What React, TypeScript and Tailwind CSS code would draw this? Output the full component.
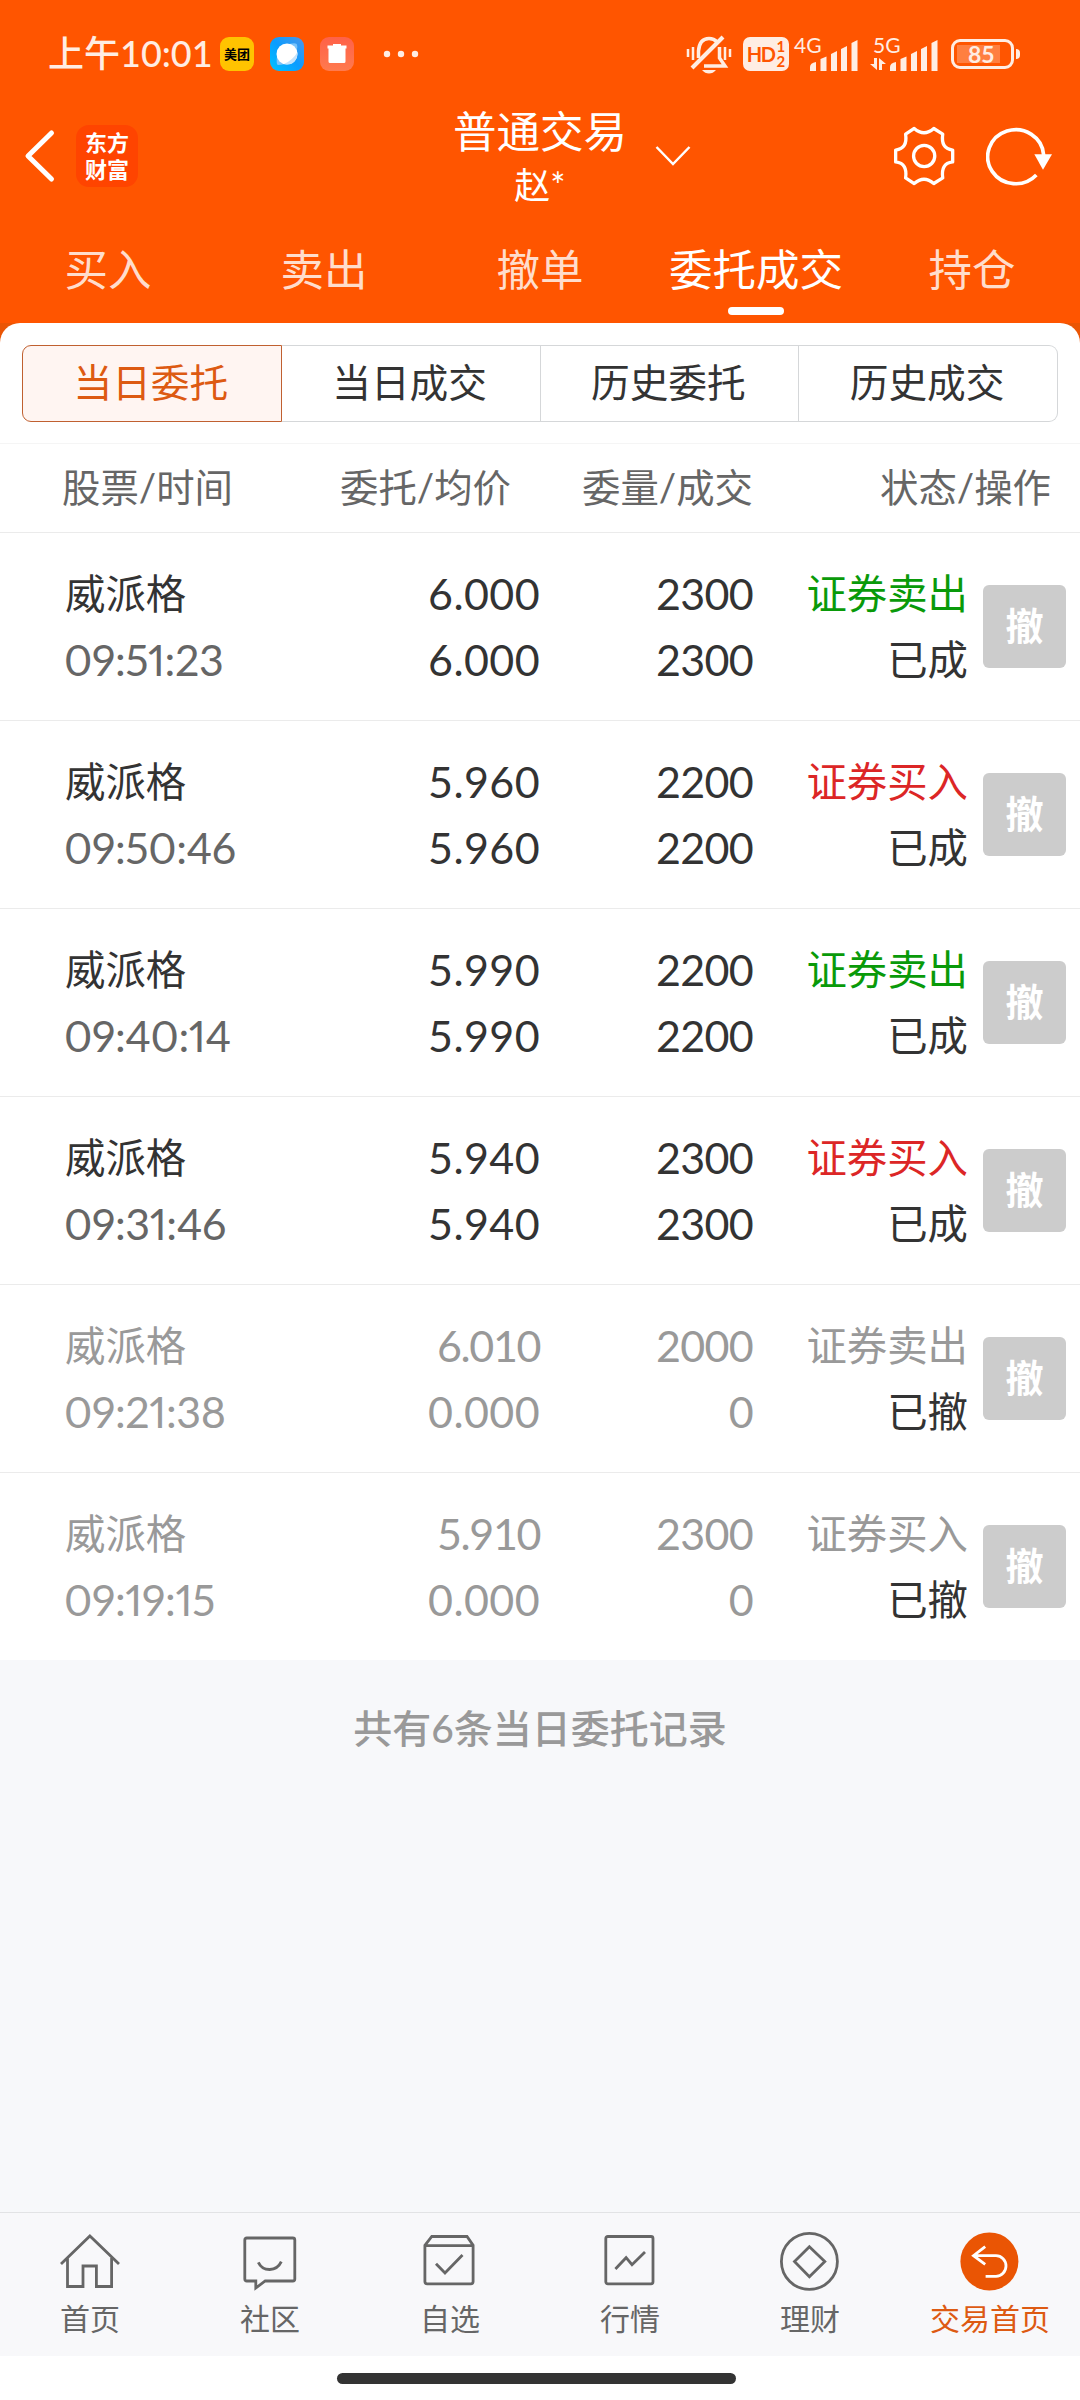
import { ReactNode, useState } from 'react'
import { clsx } from 'clsx'

type TOrder = {
  name: string;
  time: string;
  price: string;
  avgPrice: string;
  amount: string;
  filled: string;
  side: string;
  status: string;
}

const orders: TOrder[] = [
  { name: '威派格', time: '09:51:23', price: '6.000', avgPrice: '6.000', amount: '2300', filled: '2300', side: '证券卖出', status: '已成' },
  { name: '威派格', time: '09:50:46', price: '5.960', avgPrice: '5.960', amount: '2200', filled: '2200', side: '证券买入', status: '已成' },
  { name: '威派格', time: '09:40:14', price: '5.990', avgPrice: '5.990', amount: '2200', filled: '2200', side: '证券卖出', status: '已成' },
  { name: '威派格', time: '09:31:46', price: '5.940', avgPrice: '5.940', amount: '2300', filled: '2300', side: '证券买入', status: '已成' },
  { name: '威派格', time: '09:21:38', price: '6.010', avgPrice: '0.000', amount: '2000', filled: '0', side: '证券卖出', status: '已撤' },
  { name: '威派格', time: '09:19:15', price: '5.910', avgPrice: '0.000', amount: '2300', filled: '0', side: '证券买入', status: '已撤' },
]

const mainTabs = ['买入', '卖出', '撤单', '委托成交', '持仓']
const subTabs = ['当日委托', '当日成交', '历史委托', '历史成交']

const navItems: { label: string; icon: ReactNode }[] = [
  {
    label: '首页',
    icon: <path d="M1 32 29.9 4 59 32M7.5 26V54.5H23V34H36.4V54.5H51.6V26" />,
  },
  {
    label: '社区',
    icon: <path d="M6.8 6H52.8Q54.8 6 54.8 8V47Q54.8 49 52.8 49H25.2L15.8 56V49H6.8Q4.8 49 4.8 47V8Q4.8 6 6.8 6ZM18.3 30.3C23 40 36.5 40 41.3 29.7" />,
  },
  {
    label: '自选',
    icon: <path d="M4.9 13.3 11.8 4.5H47L53.1 13.3V49.5Q53.1 51.8 50.8 51.8H7.2Q4.9 51.8 4.9 49.5ZM4.9 13.6H53.1M16 31.7 25 41 42.5 23" />,
  },
  {
    label: '行情',
    icon: (
      <>
        <rect x="5.8" y="4.5" width="47.2" height="47.3" rx="2" />
        <path d="M15.4 37 26.1 25.7 32 32.7 45 20" />
      </>
    ),
  },
  {
    label: '理财',
    icon: (
      <>
        <circle cx="29.4" cy="29.4" r="28" />
        <path d="M29.4 14.7 44.8 29.4 29.4 44.7 14.5 29.4Z" />
      </>
    ),
  },
  {
    label: '交易首页',
    icon: (
      <>
        <circle cx="29.4" cy="29.4" r="29" fill="#ea5504" stroke="none" />
        <path d="M25.2 14.7 13.5 23.7 25.2 32.3M13.5 23.7H36A10 10.3 0 0 1 36 44.3H25.6" stroke="#fff" />
      </>
    ),
  },
]

function Signal() {
  return (
    <svg width="48" height="31" viewBox="0 0 48 31" fill="#ffede3">
      <path d="M0 31V27Q0 23 6 22V31ZM10.5 31V19L16.5 16.5V31ZM21 31V14L27 11V31ZM31 31V9L37 6V31ZM41.5 31V3L47.5 0V31Z" />
    </svg>
  )
}

function StatusBar() {
  return (
    <div className="flex h-[104px] items-center pl-[48px] pr-[60px] pt-1 text-[#ffede3]">
      <span className="w-[172px] whitespace-nowrap pb-[2px] text-[36px] font-medium leading-none">上午10:01</span>
      <span className="flex h-[34px] w-[34px] items-center justify-center rounded-[9px] bg-[#ffc300] text-[13px] font-bold leading-none text-black">美团</span>
      <svg className="ml-4" width="34" height="34" viewBox="0 0 34 34">
        <defs>
          <linearGradient id="browser" x1="0" y1="1" x2="1" y2="0">
            <stop offset="0" stopColor="#00c3ff" />
            <stop offset="0.5" stopColor="#0a9cff" />
            <stop offset="1" stopColor="#4e96e8" />
          </linearGradient>
        </defs>
        <rect width="34" height="34" rx="9" fill="url(#browser)" />
        <path d="M19 7Q27 5 27 8 28 10 26 15ZM7 19Q6 28 8 28 11 28 15 27Z" fill="#7cc4fb" />
        <circle cx="17" cy="17" r="10.5" fill="#fff" />
        <path d="M27.5 15Q23 23 14 27 24 29 27 20Z" fill="#c5e3fb" />
      </svg>
      <svg className="ml-4" width="34" height="34" viewBox="0 0 34 34">
        <defs>
          <linearGradient id="trash" x1="0" y1="0" x2="0" y2="1">
            <stop offset="0" stopColor="#ff6148" />
            <stop offset="1" stopColor="#ff7a4e" />
          </linearGradient>
        </defs>
        <rect width="34" height="34" rx="9" fill="url(#trash)" />
        <path d="M13 7H21V8.5H26.5V11.5H25.5V24.5Q25.500 26 24 26H10Q8.500 26 8.500 24.500V11.5H7.5V8.5H13Z" fill="#fff" />
      </svg>
      <svg className="ml-7" width="38" height="8" viewBox="0 0 38 8" fill="#ffede3">
        <circle cx="5" cy="4" r="3.2" />
        <circle cx="19" cy="4" r="3.2" />
        <circle cx="33" cy="4" r="3.2" />
      </svg>

      <svg className="ml-auto" width="46" height="40" viewBox="0 0 46 40" fill="none" stroke="#ffede3" strokeWidth="3.5">
        <path d="M12.5 24V17Q13.5 4.5 23 4.5 28 4.5 31 8M33.5 13V24L39 32H18" />
        <path d="M37 3 6 34" strokeWidth="4" />
        <path d="M2 15V23M7 13V26M39 13V26M44 15V23" strokeWidth="2.5" />
        <path d="M16 36H30Q27 39.5 23 39.5T16 36Z" fill="#ffede3" stroke="none" />
      </svg>
      <div className="ml-[11px] flex h-[34px] w-[46px] items-center justify-center gap-[1px] rounded-[7px] bg-[#ffede3] font-bold leading-none text-[#ff5500]">
        <span className="text-[20px] tracking-[-1.5px]">HD</span>
        <span className="flex flex-col pl-[1px] text-[15px] leading-[15px]">
          <span>1</span>
          <span>2</span>
        </span>
      </div>
      <div className="ml-[5px] flex h-[34px] items-end">
        <span className="w-[16px] self-start whitespace-nowrap text-[21px] leading-[16px]">4G</span>
        <Signal />
      </div>
      <div className="ml-[12px] flex h-[34px] items-end">
        <div className="flex w-[20px] flex-col self-stretch">
          <span className="ml-[3px] whitespace-nowrap text-[21px] leading-[16px]">5G</span>
          <svg className="mt-[5px]" width="16" height="12" viewBox="0 0 16 12" fill="#ffede3">
            <path d="M4 0H7V12L0 6H4ZM9 0 16 6H12V12H9Z" />
          </svg>
        </div>
        <Signal />
      </div>
      <div className="ml-[13px] flex items-center gap-[2px]">
        <div className="flex h-[30px] w-[63px] rounded-[9px] border-[3px] border-[#ffede3] p-[3px]">
          <div className="flex h-full w-[43px] items-center bg-[#ff7f40] pl-[11px] text-[23px] font-bold leading-none">85</div>
        </div>
        <div className="h-[10px] w-[4px] rounded-r-full bg-[#ffede3]" />
      </div>
    </div>
  )
}

function TitleBar() {
  return (
    <div className="grid h-[104px] grid-cols-[1fr_auto_1fr] grid-rows-[104px] items-center">
      <div className="flex items-center pl-[24px]">
        <svg width="32" height="54" viewBox="0 0 32 54" fill="none" stroke="#fff" strokeWidth="5" strokeLinecap="round" strokeLinejoin="round">
          <path d="M27.5 4 4 27 27.5 50" />
        </svg>
        <div className="ml-5 flex h-[62px] w-[62px] flex-col items-center justify-center rounded-[13px] bg-[#ff4400] pb-[3px] font-['Noto_Sans_CJK_SC',sans-serif] text-[22px] font-bold leading-[27px] text-white">
          <span>东方</span>
          <span>财富</span>
        </div>
      </div>
      <div className="flex flex-col items-center pt-1 text-white">
        <span className="text-[43.5px] leading-[54px]">普通交易</span>
        <span className="text-[36px] leading-[54px]">赵*</span>
      </div>
      <div className="flex items-center pr-[27px]">
        <svg className="ml-[28px]" width="36" height="22" viewBox="0 0 36 22" fill="none" stroke="#fff" strokeWidth="2.5">
          <path d="M1.5 2 18 19 34.5 2" />
        </svg>
        <svg className="ml-auto" width="63" height="62" viewBox="0 0 190 186" fill="none" stroke="#fff" strokeWidth="10" strokeLinejoin="round">
          <path d="M64 10Q93.5 36 123 10L150 27C146 55 154 72 180 75V111C154 114 146 131 150 159L123 176Q93.5 150 64 176L38 159C42 131 34 114 8 111V75C34 72 42 55 38 27Z" />
          <circle cx="94" cy="93" r="32" />
        </svg>
        <svg className="ml-[30px]" width="67" height="62" viewBox="0 0 201 186" fill="none">
          <path d="M173 90A84 81 0 1 0 151 150" stroke="#fff" strokeWidth="11" />
          <path d="M145 88H198L171 134Z" fill="#fff" />
        </svg>
      </div>
    </div>
  )
}

function Price({ value }: { value: string }) {
  return <span className={value.includes('1') ? 'tracking-[-1.4px]' : 'tracking-[0.4px]'}>{value}</span>
}

function OrderRow({ order }: { order: TOrder }) {
  const cancelled = order.status === '已撤'
  const sold = order.side === '证券卖出'

  return (
    <div className={clsx('flex h-[188px] items-center border-t border-[#ebebeb] bg-white text-[43px] leading-[66px]', cancelled ? 'text-[#999]' : 'text-[#333]')}>
      <div className="flex w-[240px] flex-col pl-[65px]">
        <span className="text-[40.4px]">{order.name}</span>
        <span className={clsx('-ml-[1px] tracking-[-0.4px] proportional-nums', !cancelled && 'text-[#666]')}>{order.time}</span>
      </div>
      <div className="flex w-[300px] flex-col text-right">
        <Price value={order.price} />
        <Price value={order.avgPrice} />
      </div>
      <div className="flex w-[213px] flex-col text-right tracking-[-0.7px]">
        <span>{order.amount}</span>
        <span>{order.filled}</span>
      </div>
      <div className="flex w-[215px] flex-col text-right text-[40.4px]">
        <span className={clsx(!cancelled && (sold ? 'text-[#099a09]' : 'text-[#dc2626]'))}>{order.side}</span>
        <span className="text-[#333]">{order.status}</span>
      </div>
      <button className="ml-[15px] h-[83px] w-[83px] rounded-[6px] bg-[#ccc] pb-[3px] text-[38px] font-bold text-white">撤</button>
    </div>
  )
}

export default function App() {
  const [mainTab, setMainTab] = useState('委托成交')
  const [subTab, setSubTab] = useState('当日委托')

  return (
    <div className="flex h-[2400px] w-[1080px] flex-col bg-[#f7f8fa] font-['Lato','Noto_Sans_CJK_SC',sans-serif]">
      <header className="h-[323px] bg-[#ff5500]">
        <StatusBar />
        <TitleBar />
        <nav className="grid grid-cols-5">
          {mainTabs.map(tab => (
            <button key={tab} className="flex flex-col items-center pt-[31px]" onClick={() => setMainTab(tab)}>
              <span className={clsx('whitespace-nowrap text-[43.5px] leading-[60px]', tab === mainTab ? 'text-white' : 'text-[#ffddcc]')}>{tab}</span>
              {tab === mainTab && <span className="mt-[8px] h-[8px] w-[56px] rounded-full bg-white" />}
            </button>
          ))}
        </nav>
      </header>

      <div className="bg-[#ea5504]">
        <div className="flex h-[120px] rounded-t-[20px] bg-white px-[22px] pt-[22px]">
          {subTabs.map(tab => (
            <button
              key={tab}
              className={clsx(
                'h-[77px] flex-1 border pb-[2px] pr-[2px] text-[38.7px] first:rounded-l-[9px] last:rounded-r-[9px]',
                tab === subTab ? 'border-[#c06030] bg-[#fff5f2] text-[#dd5a12]' : 'border-l-0 border-[#d5d7d9] text-[#333]',
              )}
              onClick={() => setSubTab(tab)}
            >
              {tab}
            </button>
          ))}
        </div>
      </div>

      <div className="flex h-[89px] items-center border-t border-[#f5f5f5] bg-white text-[38.4px] text-[#666]">
        <span className="w-[240px] whitespace-nowrap pl-[62px]">股票/时间</span>
        <span className="w-[271px] text-right">委托/均价</span>
        <span className="w-[242px] text-right">委量/成交</span>
        <span className="w-[298px] text-right">状态/操作</span>
      </div>

      {orders.map(order => <OrderRow key={order.time} order={order} />)}

      <p className="pt-[38px] text-center text-[39px] font-medium leading-[60px] text-[#999]">共有6条当日委托记录</p>

      <nav className="mt-auto grid h-[144px] grid-cols-6 border-t border-[#e2e3e5] bg-[#f8f8fa]">
        {navItems.map((item, index) => (
          <button key={item.label} className={clsx('flex flex-col items-center pt-[19px] text-[30px] leading-[52px]', index === 5 ? 'text-[#dd5a12]' : 'text-[#666]')}>
            <svg className="shrink-0" width="60" height="60" viewBox="0 0 60 60" fill="none" stroke="#666" strokeWidth="2.8">{item.icon}</svg>
            <span className="whitespace-nowrap">{item.label}</span>
          </button>
        ))}
      </nav>
      <div className="flex h-[44px] justify-center bg-white pr-[7px] pt-[17px]">
        <div className="h-[11px] w-[399px] rounded-full bg-[#333]" />
      </div>
    </div>
  )
}
